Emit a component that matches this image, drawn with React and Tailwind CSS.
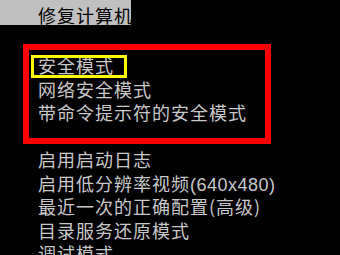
import React from 'react';

const font = { fontFamily: '"Noto Sans CJK SC", "Noto Sans", sans-serif' };

const boxed = ['网络安全模式', '带命令提示符的安全模式'];

const Row = ({ children }) => (
  <div className="h-[23.5px] leading-[23.5px] whitespace-nowrap">{children}</div>
);

const App = () => {
  return (
    <div className="w-[340px] h-[255px] overflow-hidden bg-black text-[18px] tracking-[1px] text-[#c8c8c8]" style={font}>
      <div className="w-[131px] h-[25px] bg-[#c0c0c0] text-black pl-[38px] pt-[5px] leading-[20px] whitespace-nowrap">
        修复计算机
      </div>

      <div className="ml-[23px] mt-[19px] w-[248px] h-[100px] border-[6px] border-[#ff0000] pt-[4px] pl-[9px]">
        <div className="relative h-[23.5px] leading-[23.5px]">
          <span className="absolute -left-[7px] top-[1px] w-[96px] h-[23px] border-[3px] border-[#ffff00]" />
          安全模式
        </div>
        {boxed.map(t => (
          <Row key={t}>{t}</Row>
        ))}
      </div>

      <div className="mt-[4px] pl-[38px]">
        <Row>启用启动日志</Row>
        <Row>
          启用低分辨率视频
          <span className="tracking-[0.5px]" style={{ fontFamily: '"Liberation Sans", Arial, sans-serif' }}>(640x480)</span>
        </Row>
        <Row>最近一次的正确配置(高级)</Row>
        <Row>目录服务还原模式</Row>
        <Row>调试模式</Row>
      </div>
    </div>
  );
};

export default App;
